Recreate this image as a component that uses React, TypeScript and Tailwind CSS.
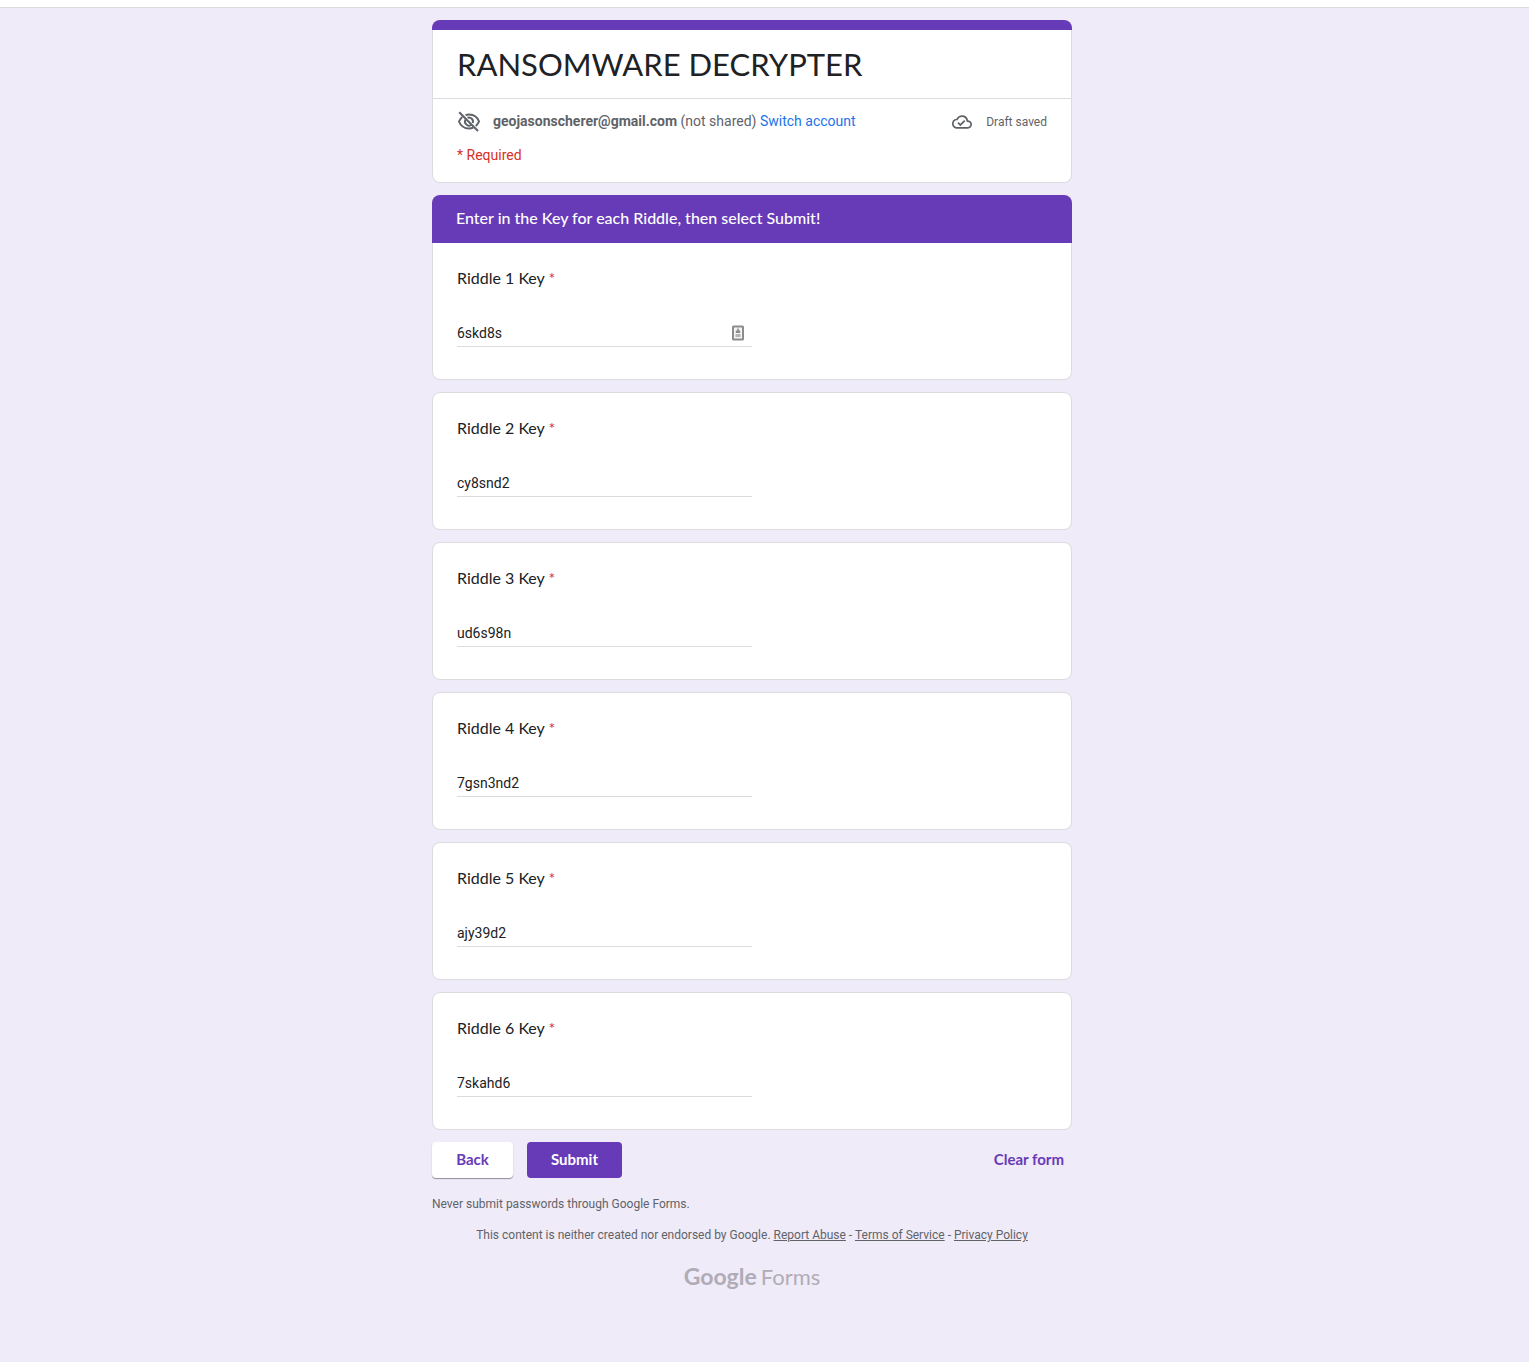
import { MdOutlineCloudDone } from "react-icons/md";

const riddles = [
  { id: 1, value: "6skd8s" },
  { id: 2, value: "cy8snd2" },
  { id: 3, value: "ud6s98n" },
  { id: 4, value: "7gsn3nd2" },
  { id: 5, value: "ajy39d2" },
  { id: 6, value: "7skahd6" },
];

function HiddenEyeIcon() {
  return (
    <svg viewBox="0 0 24 24" className="size-6 shrink-0" fill="none" stroke="#5f6368" strokeWidth="2" aria-hidden="true">
      <path d="M8.500 5.100C9.600 4.700 10.800 4.500 12 4.500c4.500 0 8.400 2.800 10 7-.7 1.800-1.800 3.300-3.200 4.500" />
      <path d="M5.200 6.900C3.800 8.100 2.700 9.700 2 11.500c1.600 4.200 5.500 7 10 7 1.500 0 3-.3 4.300-.9" />
      <path d="M8.600 9.500a4 4 0 0 0 5.500 5.500" />
      <path d="M10.500 7.800a4 4 0 0 1 5.200 5.200" />
      <path d="M2.200 2.200 21 21" />
    </svg>
  );
}

function ContactCardIcon() {
  return (
    <svg viewBox="0 0 12 16" className="h-4 w-3" aria-hidden="true">
      <rect x="1" y="1.500" width="10" height="13" rx="0.5" fill="#f4f4f4" stroke="#8c8c8c" strokeWidth="2" />
      <path d="M5.200 3.500h1.600v2h1.400v2.500H3.800V5.500h1.400z" fill="#8c8c8c" />
      <path d="M3.500 9h5v3h-5z" fill="#b4b4b4" />
    </svg>
  );
}

function RiddleCard({ id, value }: { id: number; value: string }) {
  const first = id === 1;
  return (
    <section
      className={
        first
          ? "rounded-b-lg border border-t-0 border-[#dadce0] bg-white px-6 pt-[23px] pb-8"
          : "mt-3 rounded-lg border border-[#dadce0] bg-white px-6 pt-[23px] pb-8"
      }
    >
      <label htmlFor={`riddle-${id}`} className="block font-['Lato',sans-serif] text-base leading-6 text-[#202124]">
        Riddle {id} Key <span className="text-[#d93025]">*</span>
      </label>
      <div className="relative mt-[31px] w-1/2">
        <input
          id={`riddle-${id}`}
          type="text"
          required
          defaultValue={value}
          className="block h-[26px] w-full border-b border-[#dadce0] bg-transparent pb-px text-sm text-[#202124] outline-none"
        />
        {first && (
          <span className="absolute top-1 right-2">
            <ContactCardIcon />
          </span>
        )}
      </div>
    </section>
  );
}

export default function App() {
  return (
    <div className="min-h-screen bg-[#f0ebf8] font-['Roboto',sans-serif]">
      <div className="h-2 border-b border-[#dadce0] bg-white" />
      <div className="pt-3 pr-[25px] pb-16">
        <main className="mx-auto max-w-[640px]">
          <form onSubmit={(e) => e.preventDefault()}>
            <header>
              <div className="h-2.5 rounded-t-lg bg-[#673ab7]" />
              <div className="rounded-b-lg border border-t-0 border-[#dadce0] bg-white">
                <h1 className="px-6 py-3.5 font-['Lato',sans-serif] text-[31px] leading-10 text-[#202124]">
                  RANSOMWARE DECRYPTER
                </h1>
                <div className="border-t border-[#dadce0] px-6 pt-[11px] pb-[15px]">
                  <div className="flex items-start justify-between">
                    <div className="flex items-start gap-3">
                      <HiddenEyeIcon />
                      <p className="text-sm leading-[22px] text-[#5f6368]">
                        <span className="font-bold">geojasonscherer@gmail.com</span> (not shared){" "}
                        <a href="#switch" className="text-[#1a73e8]">
                          Switch account
                        </a>
                      </p>
                    </div>
                    <div className="flex items-center gap-3.5 text-xs leading-6 text-[#5f6368]">
                      <MdOutlineCloudDone className="size-5" aria-hidden="true" />
                      Draft saved
                    </div>
                  </div>
                  <p className="mt-[9px] text-sm leading-6 text-[#d93025]">* Required</p>
                </div>
              </div>
            </header>

            <h2 className="mt-3 rounded-t-lg bg-[#673ab7] px-6 pt-[11px] pb-[13px] font-['Lato',sans-serif] text-base leading-6 font-medium text-white">
              Enter in the Key for each Riddle, then select Submit!
            </h2>
            {riddles.map((r) => (
              <RiddleCard key={r.id} id={r.id} value={r.value} />
            ))}

            <div className="mt-3 flex items-center justify-between font-['Lato',sans-serif] text-[15px] font-bold">
              <div className="flex gap-3.5">
                <button
                  type="button"
                  className="h-9 min-w-[81px] rounded bg-white px-6 pb-0.5 text-[#673ab7] shadow-[0_1px_1px_rgba(0,0,0,0.4)]"
                >
                  Back
                </button>
                <button type="submit" className="h-9 min-w-[95px] rounded bg-[#673ab7] px-5 pb-0.5 text-white">
                  Submit
                </button>
              </div>
              <button type="reset" className="h-9 px-2 pb-0.5 text-[#673ab7]">
                Clear form
              </button>
            </div>
          </form>

          <footer className="text-xs leading-4 text-[#5f6368]">
            <p className="mt-[18px]">Never submit passwords through Google Forms.</p>
            <p className="mt-[15px] text-center">
              This content is neither created nor endorsed by Google.{" "}
              <a href="#abuse" className="underline">Report Abuse</a> -{" "}
              <a href="#terms" className="underline">Terms of Service</a> -{" "}
              <a href="#privacy" className="underline">Privacy Policy</a>
            </p>
            <p className="mt-[19px] flex items-baseline justify-center gap-1 font-['Lato',sans-serif] text-[22px] leading-7 text-[#b0acb7]">
              <span className="text-[23px] font-bold">Google</span>
              <span>Forms</span>
            </p>
          </footer>
        </main>
      </div>
    </div>
  );
}
